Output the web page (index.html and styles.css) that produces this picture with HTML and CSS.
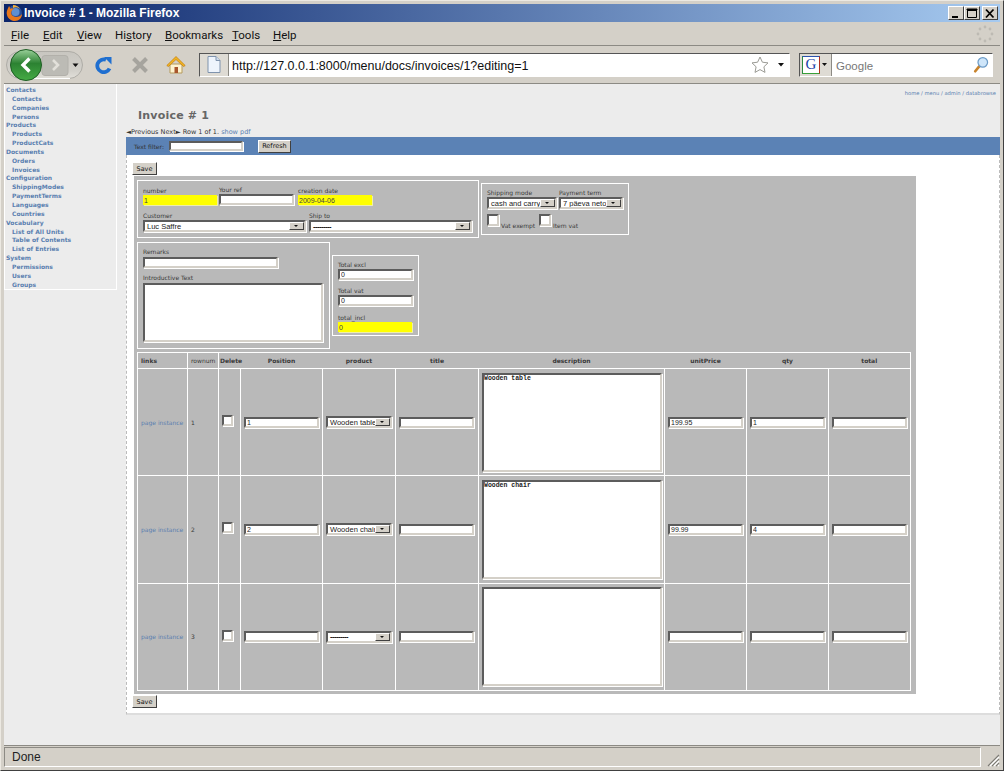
FILE: index.html
```html
<!DOCTYPE html>
<html lang="en">
<head>
    <meta charset="UTF-8">
    <title>Invoice # 1 - Mozilla Firefox</title>
    <link rel="stylesheet" href="styles.css">
</head>
<body>
<div class="window">
    <div class="titlebar">
        <svg class="fx-logo" width="18" height="18" viewBox="0 0 18 18">
            <circle cx="9.5" cy="9" r="7.5" fill="#2a4f96"/>
            <circle cx="10.5" cy="8" r="4" fill="#5f8fd0"/>
            <path d="M4 2 C3 5 1 7 2 11 C3 15 7 17 10 17 C14 17 17 14 17 10 C15 13 11 14 8 12 C5 10 6 6 9 5 C7 4 6 4 5 5 C5 4 5 3 4 2 Z" fill="#e8781c"/>
            <path d="M8 1 C11 1 14 3 15 5 C13 3 10 3 8 4 Z" fill="#f4b03a"/>
        </svg>
        <span class="title-text">Invoice # 1 - Mozilla Firefox</span>
        <div class="win-buttons">
            <span class="win-btn"><svg width="14" height="11" viewBox="0 0 14 11"><rect x="3" y="8" width="6" height="2" fill="#000"/></svg></span>
            <span class="win-btn"><svg width="14" height="11" viewBox="0 0 14 11"><path d="M2.5 1.5h9v8h-9z M2 1h10v1H2z" fill="none" stroke="#000"/><rect x="2" y="1" width="10" height="2" fill="#000"/></svg></span>
            <span class="win-btn close"><svg width="14" height="11" viewBox="0 0 14 11"><path d="M3 1.5l7.5 8M10.5 1.5l-7.5 8" stroke="#000" stroke-width="1.8"/></svg></span>
        </div>
    </div>

    <div class="menubar">
        <span class="menu-item"><u>F</u>ile</span>
        <span class="menu-item"><u>E</u>dit</span>
        <span class="menu-item"><u>V</u>iew</span>
        <span class="menu-item">Hi<u>s</u>tory</span>
        <span class="menu-item"><u>B</u>ookmarks</span>
        <span class="menu-item"><u>T</u>ools</span>
        <span class="menu-item"><u>H</u>elp</span>
        <svg class="throbber" width="18" height="18" viewBox="0 0 18 18" fill="#bdbab3">
            <circle cx="9" cy="2" r="1.4"/><circle cx="14" cy="4" r="1.4"/><circle cx="16" cy="9" r="1.4"/><circle cx="14" cy="14" r="1.4"/>
            <circle cx="9" cy="16" r="1.4"/><circle cx="4" cy="14" r="1.4"/><circle cx="2" cy="9" r="1.4"/><circle cx="4" cy="4" r="1.4"/>
        </svg>
    </div>

    <div class="navbar">
        <svg class="nav-back" width="78" height="32" viewBox="0 0 78 32">
            <defs>
                <linearGradient id="pill" x1="0" y1="0" x2="0" y2="1"><stop offset="0" stop-color="#c8c6c0"/><stop offset="0.7" stop-color="#d2d0ca"/><stop offset="1" stop-color="#e2e0da"/></linearGradient>
                <linearGradient id="green" x1="0" y1="0" x2="0" y2="1"><stop offset="0" stop-color="#9ad09a"/><stop offset="0.45" stop-color="#2c8232"/><stop offset="1" stop-color="#45ab45"/></linearGradient>
            </defs>
            <rect x="0.5" y="2.5" width="76" height="27" rx="13.5" fill="url(#pill)" stroke="#aeaca6"/>
            <path d="M14 29.5h50" stroke="#fff"/>
            <rect x="36" y="6.5" width="26" height="20" rx="3" fill="#bcbbb5" stroke="#b2b0aa"/>
            <circle cx="20" cy="16" r="15.5" fill="url(#green)" stroke="#1e5d24"/>
            <path d="M23.5 9.5l-6.5 6.5 6.5 6.5" fill="none" stroke="#fff" stroke-width="3.4"/>
            <path d="M47 11l5 5-5 5" fill="none" stroke="#e2e0da" stroke-width="2.6"/>
            <path d="M66.5 14.5h6l-3 3.5z" fill="#111"/>
        </svg>
        <svg class="nav-reload" width="18" height="18" viewBox="0 0 18 18">
            <path d="M15.5 12.5 A6.4 6.4 0 1 1 12 3.8" fill="none" stroke="#1f6fd0" stroke-width="3.8"/>
            <path d="M10 1h7.5v7.5z" fill="#1f6fd0"/>
        </svg>
        <svg class="nav-stop" width="18" height="18" viewBox="0 0 18 18">
            <path d="M2.5 2.5l13 13M15.5 2.5l-13 13" stroke="#a6a49e" stroke-width="4"/>
        </svg>
        <svg class="nav-home" width="20" height="20" viewBox="0 0 20 20">
            <path d="M4 9v9h12V9z" fill="#fdf3cf" stroke="#b59a5c"/>
            <rect x="8.5" y="12" width="3.5" height="6" fill="#a8562c"/>
            <path d="M10 1.5L0.8 10.5l1.6 1L10 4.5l7.6 7 1.6-1z" fill="#f2b520" stroke="#c07a10" stroke-width="0.7"/>
        </svg>
        <div class="urlbar">
            <span class="url-icon">
                <svg width="14" height="17" viewBox="0 0 14 17"><path d="M1 .5h8l4 4v12H1z" fill="#eef4fc" stroke="#7f93ad"/><path d="M9 .5v4h4" fill="#cfdcec" stroke="#7f93ad"/></svg>
            </span>
            <span class="url-text">http://127.0.0.1:8000/menu/docs/invoices/1?editing=1</span>
            <svg class="url-star" width="18" height="17" viewBox="0 0 18 17"><path d="M9 1l2.4 5.2 5.6.7-4.1 3.9 1.1 5.6L9 13.6l-5 2.8 1.1-5.6L1 6.9l5.6-.7z" fill="#fff" stroke="#9a9a94"/></svg>
            <svg class="url-drop" width="6" height="4" viewBox="0 0 6 4"><path d="M0 0h6L3 3.5z" fill="#111"/></svg>
        </div>
        <div class="searchbar">
            <span class="search-engine">
                <span class="g-icon">G</span>
                <svg width="5" height="3" viewBox="0 0 5 3"><path d="M0 0h5L2.5 3z" fill="#111"/></svg>
            </span>
            <span class="search-text">Google</span>
            <svg class="search-glass" width="16" height="18" viewBox="0 0 18 20">
                <path d="M7 11.5L2.5 17" stroke="#c8832c" stroke-width="3" stroke-linecap="round"/>
                <circle cx="11" cy="7" r="5.4" fill="#cfe6fa" stroke="#6d9cc8" stroke-width="1.4"/>
            </svg>
        </div>
    </div>

    <div class="viewport">
        <div class="sidebar">
            <a class="nav-head">Contacts</a>
            <a class="nav-sub">Contacts</a>
            <a class="nav-sub">Companies</a>
            <a class="nav-sub">Persons</a>
            <a class="nav-head">Products</a>
            <a class="nav-sub">Products</a>
            <a class="nav-sub">ProductCats</a>
            <a class="nav-head">Documents</a>
            <a class="nav-sub">Orders</a>
            <a class="nav-sub">Invoices</a>
            <a class="nav-head">Configuration</a>
            <a class="nav-sub">ShippingModes</a>
            <a class="nav-sub">PaymentTerms</a>
            <a class="nav-sub">Languages</a>
            <a class="nav-sub">Countries</a>
            <a class="nav-head">Vocabulary</a>
            <a class="nav-sub">List of All Units</a>
            <a class="nav-sub">Table of Contents</a>
            <a class="nav-sub">List of Entries</a>
            <a class="nav-head">System</a>
            <a class="nav-sub">Permissions</a>
            <a class="nav-sub">Users</a>
            <a class="nav-sub">Groups</a>
        </div>

        <div class="main">
            <div class="crumbs">home / menu / admin / databrowse</div>
            <h1 class="page-title">Invoice # 1</h1>
            <div class="pager">◄Previous Next► Row 1 of 1. <a>show pdf</a></div>
            <div class="filterbar">
                <label>Text filter:</label>
                <input class="inp filter-input" type="text">
                <button class="btn refresh-btn" type="button">Refresh</button>
            </div>
            <div class="content">
                <button class="btn save-btn" type="button">Save</button>
                <div class="panel">
                    <div class="panel-row">
                        <div class="box box-main">
                            <div class="fields">
                                <div class="field w-number"><label>number</label><input class="hl" type="text" value="1"></div>
                                <div class="field w-ref"><label>Your ref</label><input class="inp" type="text"></div>
                                <div class="field w-date"><label>creation date</label><input class="hl" type="text" value="2009-04-06"></div>
                            </div>
                            <div class="fields second">
                                <div class="field w-customer"><label>Customer</label><div class="sel"><span class="sel-text">Luc Saffre</span><span class="sel-arrow"></span></div></div>
                                <div class="field w-shipto"><label>Ship to</label><div class="sel"><span class="sel-text dash">---------</span><span class="sel-arrow"></span></div></div>
                            </div>
                        </div>
                        <div class="box box-ship">
                            <div class="fields">
                                <div class="field w-mode"><label>Shipping mode</label><div class="sel"><span class="sel-text">cash and carry</span><span class="sel-arrow"></span></div></div>
                                <div class="field w-term"><label>Payment term</label><div class="sel"><span class="sel-text">7 päeva neto</span><span class="sel-arrow"></span></div></div>
                            </div>
                            <div class="checks">
                                <input class="chk" type="checkbox"><span class="chk-label">Vat exempt</span>
                                <input class="chk" type="checkbox"><span class="chk-label">Item vat</span>
                            </div>
                        </div>
                    </div>
                    <div class="panel-row second">
                        <div class="box box-remarks">
                            <div class="field w-remarks"><label>Remarks</label><input class="inp" type="text"></div>
                            <div class="field w-intro"><label>Introductive Text</label><textarea class="inp intro-area"></textarea></div>
                        </div>
                        <div class="box box-totals">
                            <div class="field w-total"><label>Total excl</label><input class="inp" type="text" value="0"></div>
                            <div class="field w-total"><label>Total vat</label><input class="inp" type="text" value="0"></div>
                            <div class="field w-total"><label>total_incl</label><input class="hl" type="text" value="0"></div>
                        </div>
                    </div>
                    <table class="lines">
                        <colgroup>
                            <col class="c-links"><col class="c-rownum"><col class="c-delete"><col class="c-pos"><col class="c-product"><col class="c-title"><col class="c-desc"><col class="c-num"><col class="c-num"><col class="c-num">
                        </colgroup>
                        <thead>
                            <tr>
                                <th class="lft sep">links</th><th class="lft sep plain">rownum</th><th class="lft">Delete</th><th>Position</th><th>product</th><th>title</th><th>description</th><th>unitPrice</th><th>qty</th><th>total</th>
                            </tr>
                        </thead>
                        <tbody>
                            <tr>
                                <td><a>page instance</a></td><td>1</td>
                                <td><input class="chk" type="checkbox"></td>
                                <td><input class="inp cell-input" type="text" value="1"></td>
                                <td><div class="sel"><span class="sel-text">Wooden table</span><span class="sel-arrow"></span></div></td>
                                <td><input class="inp cell-input" type="text"></td>
                                <td><textarea class="inp desc-area">Wooden table</textarea></td>
                                <td><input class="inp cell-input" type="text" value="199.95"></td>
                                <td><input class="inp cell-input" type="text" value="1"></td>
                                <td><input class="inp cell-input" type="text"></td>
                            </tr>
                            <tr>
                                <td><a>page instance</a></td><td>2</td>
                                <td><input class="chk" type="checkbox"></td>
                                <td><input class="inp cell-input" type="text" value="2"></td>
                                <td><div class="sel"><span class="sel-text">Wooden chair</span><span class="sel-arrow"></span></div></td>
                                <td><input class="inp cell-input" type="text"></td>
                                <td><textarea class="inp desc-area">Wooden chair</textarea></td>
                                <td><input class="inp cell-input" type="text" value="99.99"></td>
                                <td><input class="inp cell-input" type="text" value="4"></td>
                                <td><input class="inp cell-input" type="text"></td>
                            </tr>
                            <tr>
                                <td><a>page instance</a></td><td>3</td>
                                <td><input class="chk" type="checkbox"></td>
                                <td><input class="inp cell-input" type="text"></td>
                                <td><div class="sel"><span class="sel-text dash">---------</span><span class="sel-arrow"></span></div></td>
                                <td><input class="inp cell-input" type="text"></td>
                                <td><textarea class="inp desc-area"></textarea></td>
                                <td><input class="inp cell-input" type="text"></td>
                                <td><input class="inp cell-input" type="text"></td>
                                <td><input class="inp cell-input" type="text"></td>
                            </tr>
                        </tbody>
                    </table>
                </div>
                <button class="btn save-btn" type="button">Save</button>
            </div>
        </div>
    </div>

    <div class="statusbar">
        <div class="status-text">Done</div>
        <div class="status-end">
            <svg width="14" height="14" viewBox="0 0 14 14" stroke-width="1.2">
                <path d="M13 2L2 13M13 6L6 13M13 10L10 13" stroke="#7d7b75"/>
                <path d="M13 4L4 13M13 8L8 13M13 12L12 13" stroke="#fff"/>
            </svg>
        </div>
    </div>
</div>
</body>
</html>
```

FILE: styles.css
```css
* {
    box-sizing: border-box;
}
html, body {
    margin: 0;
    padding: 0;
}
body {
    width: 1004px;
    height: 771px;
    overflow: hidden;
    background: #d4d0c8;
    font-family: "Liberation Sans", Arial, sans-serif;
}
.window {
    width: 1004px;
    height: 771px;
    display: flex;
    flex-direction: column;
    border: 1px solid;
    border-color: #ece9e2 #404040 #404040 #ece9e2;
    padding: 3px 3px 3px 3px;
    background: #d4d0c8;
}

/* title bar */
.titlebar {
    height: 18px;
    flex: none;
    display: flex;
    align-items: center;
    color: #fff;
    background: linear-gradient(to right, #0a246a, #a6caf0);
    padding-left: 1px;
}
.fx-logo {
    flex: none;
}
.title-text {
    margin-left: 1px;
    font: bold 12px "Liberation Sans", Arial, sans-serif;
}
.win-buttons {
    margin-left: auto;
    display: flex;
    margin-right: 2px;
}
.win-btn {
    width: 16px;
    height: 14px;
    display: flex;
    align-items: center;
    justify-content: center;
    background: #d4d0c8;
    border: 1px solid;
    border-color: #fff #404040 #404040 #fff;
}
.win-btn.close {
    margin-left: 2px;
}

/* menus */
.menubar {
    height: 24px;
    flex: none;
    display: flex;
    align-items: center;
    position: relative;
    border-bottom: 1px solid #8c8a84;
    font: 11.5px Roboto, "Liberation Sans", sans-serif;
    color: #111;
    padding-left: 7px;
    padding-top: 3px;
}
.menu-item:nth-child(1) { width: 32px; }
.menu-item:nth-child(2) { width: 34px; }
.menu-item:nth-child(3) { width: 38px; }
.menu-item:nth-child(4) { width: 50px; }
.menu-item:nth-child(5) { width: 67px; }
.menu-item:nth-child(6) { width: 41px; }
.throbber {
    margin-left: auto;
    margin-right: 6px;
    margin-top: -3px;
}

/* navigation toolbar */
.navbar {
    height: 38px;
    flex: none;
    display: flex;
    align-items: center;
    border-bottom: 1px solid #8c8a84;
    position: relative;
}
.nav-back {
    margin-left: 2px;
    flex: none;
}
.nav-reload {
    margin-left: 10px;
}
.nav-stop {
    margin-left: 19px;
}
.nav-home {
    margin-left: 17px;
}
.urlbar {
    margin-left: 13px;
    width: 591px;
    height: 24px;
    display: flex;
    align-items: center;
    background: #fff;
    border: 1px solid;
    border-color: #555 #fff #fff #555;
}
.url-icon {
    width: 29px;
    height: 22px;
    flex: none;
    display: flex;
    align-items: center;
    justify-content: center;
    background: #dedbd4;
    border-right: 1px solid #8c8a84;
}
.url-text {
    margin-left: 3px;
    padding-top: 2px;
    font: 12.5px "Liberation Sans", Arial, sans-serif;
    color: #111;
    flex: 1;
}
.url-star {
    margin-right: 9px;
}
.url-drop {
    margin-right: 5px;
}
.searchbar {
    margin-left: 9px;
    width: 194px;
    height: 24px;
    display: flex;
    align-items: center;
    background: #fff;
    border: 1px solid;
    border-color: #555 #fff #fff #555;
}
.search-engine {
    width: 32px;
    height: 22px;
    flex: none;
    display: flex;
    align-items: center;
    gap: 2px;
    padding-left: 2px;
    background: #dedbd4;
    border-right: 1px solid #8c8a84;
}
.g-icon {
    width: 18px;
    height: 18px;
    background: #fff;
    border: 1px solid;
    border-color: #2a52b0 #b03020 #38a038 #2a8a40;
    color: #1a3fa8;
    font: 15px/15px "Liberation Serif", serif;
    text-align: center;
}
.search-text {
    margin-left: 4px;
    padding-top: 2px;
    flex: 1;
    color: #777;
    font: 11.5px "Liberation Sans", sans-serif;
}
.search-glass {
    margin-right: 3px;
}

/* page */
.viewport {
    flex: 1;
    min-height: 0;
    display: flex;
    background: #ececec;
    font-family: "DejaVu Sans", Verdana, sans-serif;
    font-size: 6px;
    color: #3a3a3a;
}
a {
    color: #5a7fb0;
}
.sidebar {
    width: 113px;
    height: 206px;
    flex: none;
    padding-top: 2px;
    border-right: 1px solid #fff;
    border-bottom: 1px solid #fff;
    border-left: 1px solid #fff;
    display: flex;
    flex-direction: column;
    font-weight: bold;
}
.sidebar a {
    height: 8.85px;
    line-height: 8.85px;
    white-space: nowrap;
}
.nav-head {
    padding-left: 1px;
}
.nav-sub {
    padding-left: 7px;
}
.main {
    flex: 1;
    min-width: 0;
    margin-left: 9px;
    display: flex;
    flex-direction: column;
}
.crumbs {
    height: 13px;
    padding: 6px 4px 0 0;
    line-height: 7px;
    text-align: right;
    color: #5a7fb0;
    font-size: 5.2px;
}
.page-title {
    margin: 12px 0 0 12px;
    height: 14px;
    font-size: 11px;
    line-height: 14px;
    letter-spacing: 0.2px;
    color: #666;
}
.pager {
    margin-top: 6px;
    height: 7px;
    line-height: 7px;
    white-space: nowrap;
    color: #333;
    font-size: 6.5px;
}
.filterbar {
    margin-top: 1px;
    height: 18px;
    flex: none;
    display: flex;
    align-items: center;
    background: #5b82b5;
    padding-left: 8px;
    color: #333;
    white-space: nowrap;
}
.filterbar .filter-input {
    margin-left: 5px;
    width: 74px;
    height: 10px;
}
.filterbar .refresh-btn {
    margin-left: 15px;
    width: 33px;
    height: 13px;
    flex: none;
}
.content {
    flex: none;
    height: 560px;
    padding: 7px 0 0 5px;
    background: #fff;
    border-left: 1px dashed #bbb;
    border-right: 1px dashed #bbb;
    border-bottom: 2px solid #ddd;
}
.btn {
    display: block;
    padding: 0;
    background: #d4d0c8;
    color: #111;
    border: 1px solid;
    border-color: #fff #404040 #404040 #fff;
    font: 6.5px "DejaVu Sans", Verdana, sans-serif;
}
.save-btn {
    width: 25px;
    height: 13px;
}
.panel {
    width: 782px;
    height: 518px;
    margin: 1px 0 1px 2px;
    padding: 4px 3px;
    background: #b9b9b9;
}
.panel-row {
    display: flex;
    align-items: flex-start;
}
.panel-row.second {
    margin-top: 4px;
}
.box {
    border: 1px solid #fff;
}
.box-main {
    width: 342px;
    height: 58px;
    padding: 5px 5px;
}
.box-ship {
    width: 148px;
    height: 52px;
    margin: 3px 0 0 2px;
    padding: 5px 5px;
}
.box-remarks {
    width: 193px;
    height: 107px;
    padding: 5px 5px;
}
.box-totals {
    width: 87px;
    height: 81px;
    margin: 13px 0 0 2px;
    padding: 5px 5px;
}
.fields {
    display: flex;
    align-items: flex-end;
}
.fields.second {
    margin-top: 7px;
}
.field {
    display: flex;
    flex-direction: column;
    flex: none;
}
.field label {
    height: 8px;
    line-height: 8px;
    white-space: nowrap;
}
.box-remarks .field label {
    height: 9px;
}
.w-number { width: 74px; margin-right: 2px; }
.w-ref { width: 75px; margin-right: 4px; }
.w-date { width: 74px; }
.w-customer { width: 163px; margin-right: 3px; }
.w-shipto { width: 163px; }
.w-mode { width: 70px; margin-right: 2px; }
.w-term { width: 64px; }
.w-remarks { width: 135px; }
.w-intro { width: 180px; margin-top: 6px; }
.w-total { width: 75px; margin-bottom: 7px; }
.w-total:nth-child(2) { margin-bottom: 8px; }
.w-total:last-child { margin-bottom: 0; }
.w-total:last-child .hl { width: 74px; }

.inp {
    display: block;
    width: 100%;
    height: 11px;
    margin: 0;
    padding: 0 0 0 1px;
    border: 2px solid;
    border-color: #5c5c5c #d4d0c8 #d4d0c8 #5c5c5c;
    box-shadow: 1px 1px 0 #fff;
    background: #fff;
    color: #222;
    font: 7px "Liberation Sans", Arial, sans-serif;
    border-radius: 0;
    outline: none;
    resize: none;
}
.hl {
    display: block;
    width: 100%;
    height: 10px;
    margin: 0;
    padding: 0 0 0 1px;
    border: 0;
    box-shadow: 1px 1px 0 #eeeeaa;
    background: #ffff00;
    color: #444;
    font: 7px "Liberation Sans", Arial, sans-serif;
}
.sel {
    display: flex;
    align-items: center;
    height: 12px;
    background: #fff;
    border: 2px solid;
    border-color: #5c5c5c #d4d0c8 #d4d0c8 #5c5c5c;
    box-shadow: 1px 1px 0 #fff;
    overflow: hidden;
    font: 7.5px "Liberation Sans", Arial, sans-serif;
    color: #222;
}
.sel-text {
    flex: 1;
    min-width: 0;
    padding-left: 2px;
    white-space: nowrap;
}
.sel-text.dash {
    font-weight: bold;
    letter-spacing: -0.5px;
    color: #000;
}
.sel-arrow {
    flex: none;
    width: 15px;
    height: 8px;
    background: #d4d0c8;
    border: 1px solid;
    border-color: #fff #404040 #404040 #fff;
    position: relative;
}
.sel-arrow::after {
    content: "";
    position: absolute;
    left: 4px;
    top: 2px;
    border-style: solid;
    border-width: 2px 2px 0;
    border-color: #111 transparent transparent;
}
.checks {
    display: flex;
    align-items: flex-end;
    margin-top: 5px;
}
.chk {
    appearance: none;
    display: block;
    width: 12px;
    height: 12px;
    margin: 0;
    background: #fff;
    border: 2px solid;
    border-color: #5c5c5c #d4d0c8 #d4d0c8 #5c5c5c;
    box-shadow: 1px 1px 0 #fff;
}
.chk-label {
    margin: 0 0 -3px 2px;
    line-height: 7px;
    white-space: nowrap;
}
.chk-label:nth-child(2) {
    width: 38px;
}
.intro-area {
    height: 59px;
}

/* invoice lines */
.lines {
    margin-top: 3px;
    width: 774px;
    table-layout: fixed;
    border-collapse: collapse;
}
.c-links { width: 50px; }
.c-rownum { width: 31px; }
.c-delete { width: 22px; }
.c-pos { width: 82px; }
.c-product { width: 73px; }
.c-title { width: 83px; }
.c-desc { width: 186px; }
.c-num { width: 82px; }
.lines th {
    height: 16px;
    padding: 0;
    text-align: center;
    border-top: 1px solid #fff;
    border-bottom: 1px solid #fff;
    font-weight: bold;
    white-space: nowrap;
}
.lines th:first-child {
    border-left: 1px solid #fff;
}
.lines th:last-child {
    border-right: 1px solid #fff;
}
.lines th.lft {
    text-align: left;
    padding-left: 1px;
    overflow: visible;
}
.lines th.sep {
    border-right: 1px solid #fff;
    padding-left: 3px;
}
.lines th.plain {
    font-weight: normal;
}
.lines td {
    height: 107.3px;
    padding: 0 3px;
    border: 1px solid #fff;
    vertical-align: middle;
    white-space: nowrap;
}
.lines .chk {
    width: 11px;
    height: 11px;
    margin-bottom: 3px;
}
.cell-input {
    width: 75px;
}
.lines td .sel {
    width: 66px;
}
.desc-area {
    width: 180px;
    height: 99px;
    padding: 0;
    font-family: "Liberation Mono", monospace;
    font-size: 6.5px;
    font-weight: bold;
}

/* status bar */
.statusbar {
    flex: none;
    height: 22px;
    display: flex;
    border-top: 1px solid #8c8a84;
    padding-top: 1px;
    font: 12px "Liberation Sans", Arial, sans-serif;
    color: #222;
}
.status-text {
    flex: 1;
    padding: 2px 0 0 7px;
    border: 1px solid;
    border-color: #8c8a84 #fff #fff #8c8a84;
}
.status-end {
    width: 19px;
    display: flex;
    align-items: flex-end;
    justify-content: flex-end;
}
```
